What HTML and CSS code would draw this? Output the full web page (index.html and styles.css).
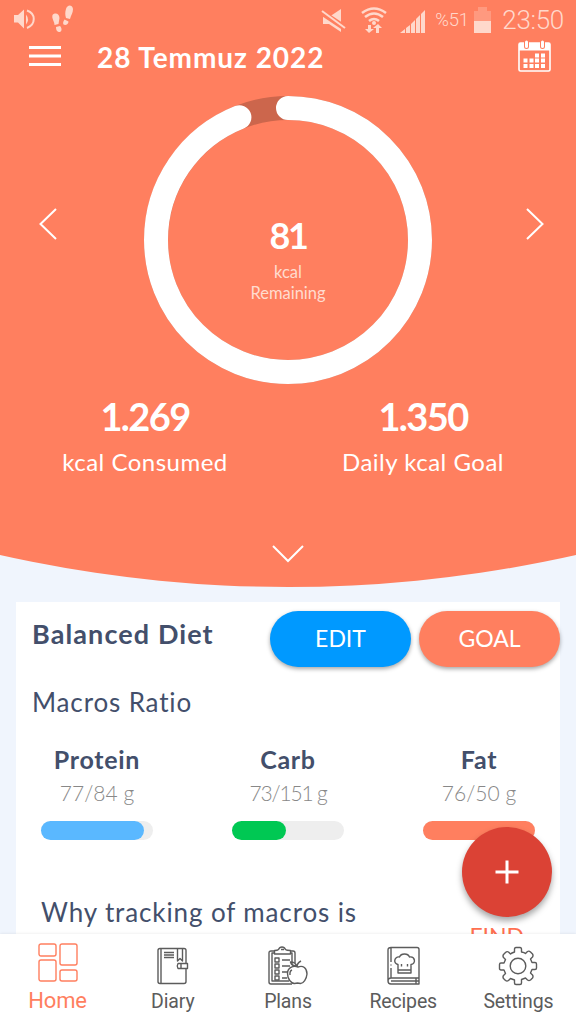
FILE: index.html
```html
<!DOCTYPE html>
<html lang="en">
<head>
  <meta charset="UTF-8">
  <meta name="viewport" content="width=device-width, initial-scale=1">
  <title>Home</title>
  <link rel="stylesheet" href="styles.css">
</head>
<body>

  <main class="screen">
    <section class="hero">
      <div class="status">
        <svg class="status-left" width="62" height="32" viewBox="0 0 62 32">
          <path d="M0 15h4l6-5.500v19l-6-6H0z" />
          <path d="M12 14.500q4 5 0 10z" />
          <path d="M13 10.500c9 3 9 14 0 17.500" class="line" />
          <path d="M38.500 15c3-3 7-1 7 3l-1 6-4 1c0-4-3-6-2-10zM42 27l4-1c2 2 2 5 0 6-3 0-4-2-4-5z" />
          <path d="M52 9c1-4 6-5 7 0 0 4-2 6-3 10l-4-1c-1-3-1-6 0-9zM50.500 19.500l4 2c0 3-3 4-5 3-1-2 0-3 1-5z" />
        </svg>
        <svg class="status-icons" width="106" height="28" viewBox="0 0 106 28">
          <path d="M2 11h6l12-8v23l-12-8H2z" />
          <path d="M0 6l24 16" class="cut" />
          <path d="M1 5l23 17" class="line" />
          <path d="M41 7q12-9 24 0M44 11q9-7 18 0M48 15q5-4 10 0" class="line wifi" />
          <circle cx="53" cy="17" r="2" />
          <path d="M48 27l-4-4h3v-4h3v4h3zM57 18l4 4h-3v5h-3v-5h-3z" />
          <path d="M79 27l5-4v4zM85 22l4-3v8h-4zM90 18l4-4v13h-4zM95 13l4-4v18h-4zM100 8l4-4v23h-4z" />
        </svg>
        <span class="battery-text">%51</span>
        <svg class="battery" width="17" height="26" viewBox="0 0 17 26">
          <path d="M0 4h4V0h9v4h4v10H0z" opacity=".3" />
          <path d="M0 14h17v12H0z" />
        </svg>
        <span class="clock">23:50</span>
      </div>

      <header class="topbar">
        <svg width="32" height="20" viewBox="0 0 32 20"><path d="M0 1.500h32M0 10h32M0 18.500h32" stroke="#fff" stroke-width="2.800" /></svg>
        <h1 class="date">28 Temmuz 2022</h1>
        <svg class="calendar" width="33" height="32" viewBox="0 0 33 32">
          <rect x="1" y="3" width="31" height="28" rx="1.500" fill="none" stroke="#fff" stroke-width="1.600" />
          <path d="M1 3h31v7.500H1z" fill="#fff" />
          <path d="M8.500 2v4.500M24.500 2v4.500" stroke="#ff7f5f" stroke-width="5" stroke-linecap="round" />
          <path d="M8.500 2v4.500M24.500 2v4.500" stroke="#fff" stroke-width="3" stroke-linecap="round" />
          <path d="M17 13.500h4v4h-4zM23 13.500h4v4h-4zM5.500 18.500h4v4h-4zM11.500 18.500h4v4h-4zM17 18.500h4v4h-4zM23 18.500h4v4h-4zM5.500 24h4v4h-4zM11.500 24h4v4h-4zM17 24h4v4h-4zM23 24h4v4h-4z" fill="#fff" />
        </svg>
      </header>

      <div class="dial-row">
        <svg class="arrow" width="18" height="32" viewBox="0 0 18 32"><path d="M17 1L1.500 16 17 31" /></svg>
        <div class="dial">
          <svg class="dial-ring" width="288" height="288" viewBox="0 0 288 288">
            <circle cx="144" cy="144" r="132" class="ring-track" />
            <circle cx="144" cy="144" r="132" pathLength="100" class="ring-value" />
          </svg>
          <div class="dial-text">
            <strong class="dial-number">81</strong>
            <span class="dial-label">kcal<br>Remaining</span>
          </div>
        </div>
        <svg class="arrow" width="18" height="32" viewBox="0 0 18 32"><path d="M1 1l15.500 15L1 31" /></svg>
      </div>

      <div class="totals">
        <div class="total">
          <strong class="total-number">1.269</strong>
          <span class="total-label">kcal Consumed</span>
        </div>
        <div class="total">
          <strong class="total-number">1.350</strong>
          <span class="total-label">Daily kcal Goal</span>
        </div>
      </div>

      <svg class="more" width="32" height="18" viewBox="0 0 32 18"><path d="M1 1l15 15L31 1" /></svg>
    </section>

    <section class="card">
      <div class="card-head">
        <h2 class="card-title">Balanced Diet</h2>
        <button class="btn btn-edit">EDIT</button>
        <button class="btn btn-goal">GOAL</button>
      </div>
      <h3 class="subtitle">Macros Ratio</h3>
      <div class="macros">
        <div class="macro">
          <strong class="macro-name">Protein</strong>
          <span class="macro-amount">77/84 g</span>
          <div class="bar"><div class="fill protein" style="width: 92%"></div></div>
        </div>
        <div class="macro">
          <strong class="macro-name">Carb</strong>
          <span class="macro-amount tight">73/151 g</span>
          <div class="bar"><div class="fill carb" style="width: 48.500%"></div></div>
        </div>
        <div class="macro">
          <strong class="macro-name">Fat</strong>
          <span class="macro-amount">76/50 g</span>
          <div class="bar"><div class="fill fat" style="width: 100%"></div></div>
        </div>
      </div>
      <div class="tip">
        <p class="tip-text">Why tracking of macros is</p>
        <a class="tip-link">FIND</a>
      </div>
    </section>
  </main>

  <button class="fab" aria-label="Add">
    <svg width="24" height="24" viewBox="0 0 24 24"><path d="M12 .500v23M.500 12h23" stroke="#fff" stroke-width="3" /></svg>
  </button>

  <nav class="tabs">
    <a class="tab active">
      <svg width="40" height="40" viewBox="0 0 40 40">
        <rect x="1" y="1" width="17" height="12" rx="2" />
        <rect x="22" y="1" width="17" height="21" rx="2" />
        <rect x="1" y="17" width="17" height="21" rx="2" />
        <rect x="22" y="27" width="17" height="11" rx="2" />
      </svg>
      <span>Home</span>
    </a>
    <a class="tab">
      <svg width="40" height="40" viewBox="0 0 40 40">
        <path d="M33 17V4.500q0-2-2-2H7q-2 0-2 2v31q0 2 2 2h24q2 0 2-2V22.500M8 2.500v35" />
        <path d="M24.500 2.500V15l2.500-2.500 2.500 2.500V2.500M11 6.500h10M11 9h10M11 11.500h10" />
        <path d="M25 17.500h9.500v5H25q-1.500-2.500 0-5zM28 17.500v5" />
      </svg>
      <span>Diary</span>
    </a>
    <a class="tab">
      <svg width="40" height="40" viewBox="0 0 40 40">
        <path d="M7 5H3Q1 5 1 7v29q0 2 2 2h21M22 5h3q2 0 2 2v10M7 7H4v28h17M22 7h2v12" />
        <path d="M6.500 8V4.500q3 0 4-1 1-2.500 3.500-2.500t3.500 2.500q1 1 5 1V8zM13 3.500h3" />
        <path d="M7 12h4v4H7zM7 18h4v4H7zM7 24h4v4H7zM7 30h4v4H7zM14 14h8M14 20h8M14 26h6M14 32h5" />
        <path d="M30 21c5-2 9 1 9 7-.500 5-3.500 9.500-6.500 9.500l-3-.500-3 .500c-3 0-7-4-7-10 0-5.500 5.500-8.500 10.500-6.500z" class="solid" />
        <path d="M29 21q0-4 4-6M28.500 20q-5 0-6-4 5 0 6 4zM22 29q-.500-4 2-5" />
      </svg>
      <span>Plans</span>
    </a>
    <a class="tab">
      <svg width="40" height="40" viewBox="0 0 40 40">
        <path d="M8 1.500h26q2 0 2 2V38H8q-3 0-3-3V4q0-2.500 3-2.500zM36 32H8q-3 0-3 3M8 35h28M8 2v14M8 18.500v1M8 22v10M33 32v6" />
        <path d="M15 27V18.500c-5-.500-4-8.500 1.500-7.500 1.500-4 8.500-4 10 0 5.500-1 7 6.500 1.500 7.500V27zM15 24h13M18.500 18v2.500M24.500 18v2.500" />
      </svg>
      <span>Recipes</span>
    </a>
    <a class="tab">
      <svg width="40" height="40" viewBox="0 0 40 40">
        <circle cx="20" cy="20" r="7.800" />
        <path d="M18 1.500h4q1.500 0 1.500 2V6q3 .500 4 1.500l2-2q1.500-1 3 .500l2 2q1 1.500 0 3l-2 2 1.500 3.500H37q1.500 0 1.500 1.500v4q0 1.500-1.500 1.500h-3l-1.500 3.500 2 2q1 1.500 0 3l-2 2q-1.500 1-3 0l-2-2-4 1.500V37q0 1.500-1.500 1.500h-4q-1.500 0-1.500-1.500v-3l-4-1.500-2 2q-1.500 1-3 0l-2-2q-1-1.500 0-3l2-2L6 24H3q-1.500 0-1.500-1.500v-4Q1.500 17 3 17h3l1.500-3.500-2-2q-1-1.500 0-3l2-2q1.500-1.500 3-.500l2 2q1-1 4-2V3.500q0-2 1.500-2z" />
      </svg>
      <span>Settings</span>
    </a>
  </nav>

</body>
</html>
```
FILE: styles.css
```css
* {
  box-sizing: border-box;
}

body {
  margin: 0;
  height: 100vh;
  display: flex;
  flex-direction: column;
  overflow: hidden;
  background: #f0f5fd;
  color: #434f6b;
  font-family: Lato, "Open Sans", sans-serif;
}

h1, h2, h3, p {
  margin: 0;
}

.screen {
  height: 934px;
  overflow: hidden;
}

/* header with the curved bottom edge */
.hero {
  height: 587px;
  background: #ff7f5f;
  color: #fff;
  clip-path: circle(1312px at 50% -725px);
}

.status {
  height: 40px;
  padding: 0 12px 0 14px;
  display: flex;
  align-items: center;
  color: #ffd8cb;
  font-family: Roboto, sans-serif;
}

.status svg {
  fill: #ffd8cb;
}

.status .line, .status .cut {
  fill: none;
  stroke: #ffd8cb;
  stroke-width: 2;
}

.status .wifi {
  stroke-width: 2.6;
}

.status .cut {
  stroke: #ff7f5f;
  stroke-width: 6;
}

.status .status-left {
  margin-right: auto;
  margin-bottom: 8px;
}

.battery-text {
  width: 34px;
  margin: 0 5px 0 8px;
  font-size: 18.5px;
  font-weight: 300;
  letter-spacing: -0.3px;
}

.clock {
  margin-left: 11px;
  font-size: 26px;
  font-weight: 300;
  letter-spacing: -0.3px;
}

.topbar {
  height: 36px;
  padding: 0 25px 0 29px;
  display: flex;
  align-items: center;
}

.topbar svg {
  margin-top: -5px;
}

.date {
  margin: -2px 0 0 36px;
  font-size: 28px;
  line-height: 36px;
  letter-spacing: 0.95px;
}

.topbar .calendar {
  margin-left: auto;
}

.dial-row {
  margin-top: 20px;
  padding: 0 32px 0 39px;
  display: flex;
  justify-content: space-between;
}

.arrow {
  margin-top: 112px;
}

.arrow path, .more path {
  fill: none;
  stroke: #fff;
  stroke-width: 2;
}

.dial {
  margin-left: -7px;
  display: grid;
}

.dial-ring, .dial-text {
  grid-area: 1 / 1;
}

.ring-track, .ring-value {
  fill: none;
  stroke: #cc664c;
  stroke-width: 24;
}

.ring-value {
  stroke: #fff;
  stroke-linecap: round;
  stroke-dasharray: 94 100;
  transform: rotate(-90deg);
  transform-origin: center;
}

.dial-text {
  padding-top: 118px;
  display: flex;
  flex-direction: column;
  align-items: center;
  text-align: center;
}

.dial-number {
  font-size: 36px;
  line-height: 42px;
  letter-spacing: -2.5px;
}

.dial-label {
  margin-top: 6px;
  color: #ffdccf;
  font-size: 16.5px;
  line-height: 21px;
}

.totals {
  margin-top: 9px;
  padding: 0 8px 0 7px;
  display: grid;
  grid-template-columns: 276px 280px;
}

.total {
  display: flex;
  flex-direction: column;
  align-items: center;
}

.total-number {
  font-size: 38px;
  line-height: 46px;
  letter-spacing: -1.6px;
}

.total-label {
  margin-top: 8px;
  font-size: 24px;
  line-height: 30px;
  letter-spacing: 0.5px;
}

.more {
  display: block;
  margin: 68px auto 0;
}

.card {
  height: 400px;
  margin: 15px 16px 0;
  padding-top: 9px;
  background: #fff;
}

.card-head {
  display: flex;
  gap: 8px;
}

.card-title {
  flex: 1;
  padding: 6px 0 0 16px;
  font-size: 27px;
  line-height: 34px;
  letter-spacing: 1.1px;
}

.btn {
  width: 141px;
  height: 56px;
  padding: 0 0 2px;
  border: 0;
  border-radius: 28px;
  color: #fff;
  font-family: inherit;
  font-size: 23px;
  box-shadow: 0 2px 4px rgba(0, 0, 0, 0.35);
}

.btn-edit {
  background: #0099ff;
}

.btn-goal {
  background: #ff7f5f;
}

.subtitle {
  padding-left: 16px;
  margin-top: 18px;
  font-size: 26px;
  font-weight: 400;
  line-height: 34px;
  letter-spacing: 0.85px;
}

.macros {
  margin-top: 25px;
  padding: 0 25px;
  display: flex;
  justify-content: space-between;
}

.macro {
  width: 112px;
  display: flex;
  flex-direction: column;
  align-items: center;
}

.macro-name {
  font-size: 25px;
  line-height: 30px;
  letter-spacing: 0.7px;
}

.macro-amount {
  margin-top: 5px;
  color: #888;
  font-size: 21px;
  font-weight: 300;
  line-height: 28px;
}

.tight {
  letter-spacing: -1.2px;
}

.bar {
  width: 100%;
  height: 19px;
  margin-top: 14px;
  border-radius: 10px;
  background: #eee;
}

.fill {
  height: 100%;
  border-radius: 10px;
}

.protein {
  background: #5ab8ff;
}

.carb {
  background: #00c853;
}

.fat {
  background: #ff7f5f;
}

.tip {
  margin-top: 55px;
  padding: 0 36px 0 25px;
  display: flex;
  justify-content: space-between;
}

.tip-text {
  font-size: 26px;
  line-height: 34px;
  letter-spacing: 0.88px;
}

.tip-link {
  margin-top: 26px;
  color: #ff6f50;
  font-size: 23px;
  line-height: 30px;
}

.fab {
  position: absolute;
  left: 462px;
  top: 827px;
  width: 90px;
  height: 90px;
  padding: 0;
  border: 0;
  border-radius: 50%;
  display: grid;
  place-items: center;
  background: #db4235;
  box-shadow: 0 4px 6px rgba(0, 0, 0, 0.35);
}

/* bottom navigation */
.tabs {
  height: 90px;
  display: grid;
  grid-template-columns: repeat(5, 1fr);
  position: relative;
  background: #fff;
  box-shadow: 0 0 3px rgba(0, 0, 0, 0.1);
  font-family: Roboto, sans-serif;
}

.tab {
  padding-top: 12px;
  display: flex;
  flex-direction: column;
  align-items: center;
  color: #5c5c5c;
  font-size: 19.5px;
  line-height: 31px;
  letter-spacing: -0.15px;
}

.tab svg {
  fill: none;
  stroke: #5c5c5c;
  stroke-width: 1.4;
  stroke-linejoin: round;
}

.tab .solid {
  fill: #fff;
}

.active {
  padding-top: 9px;
  color: #ff7f5f;
  font-size: 22px;
  line-height: 35px;
}

.active svg {
  stroke: #ff7f5f;
}
```
